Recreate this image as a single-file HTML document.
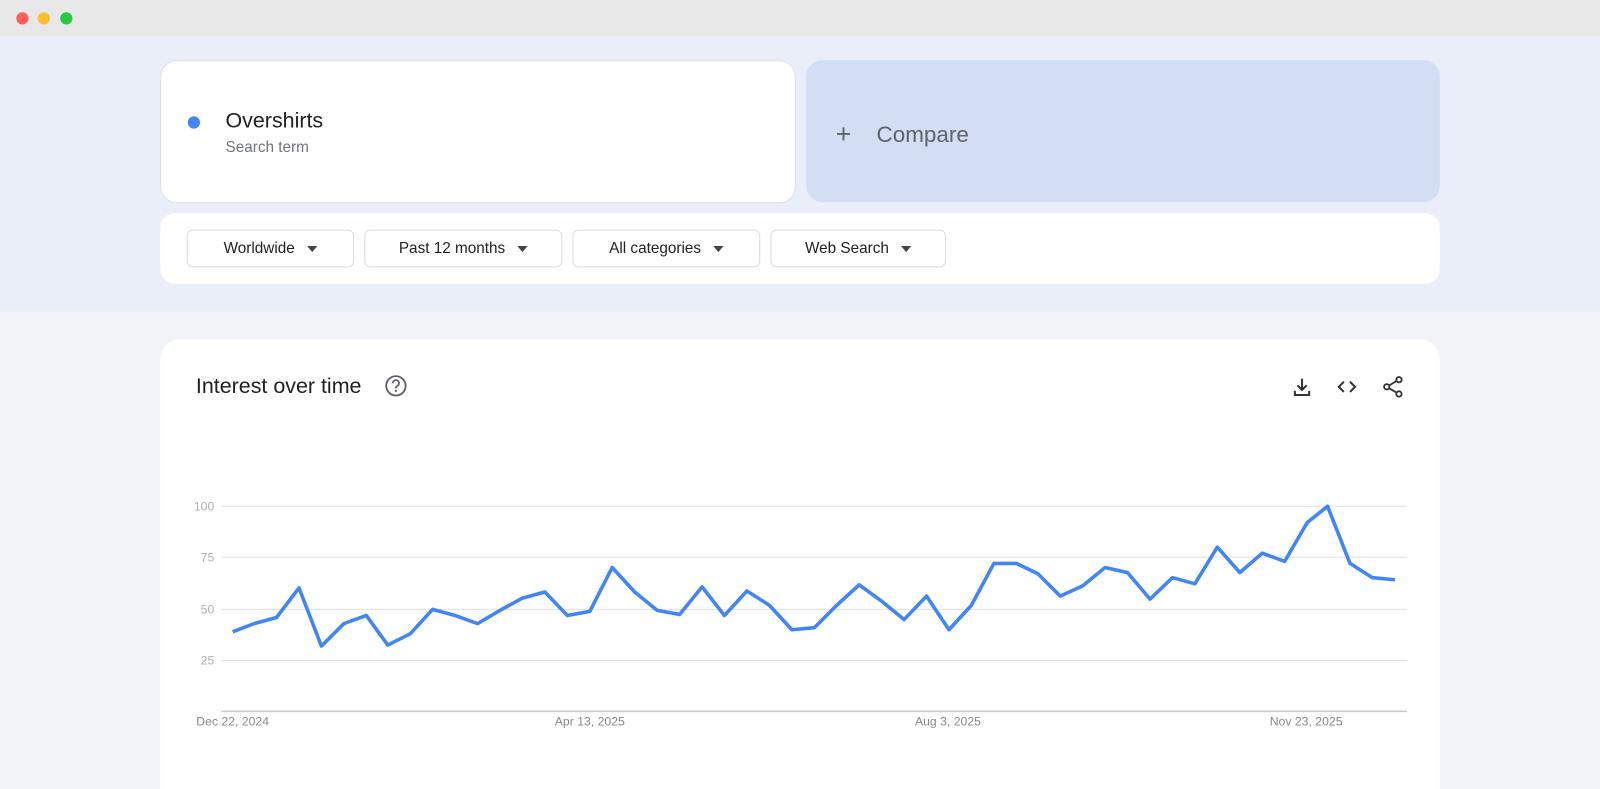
<!DOCTYPE html>
<html><head><meta charset="utf-8"><style>
html,body{margin:0;padding:0;width:1600px;height:789px;overflow:hidden;background:#f1f3f9;}
#w{position:absolute;left:0;top:0;width:1568px;height:773px;transform:scale(1.020408,1.020672);transform-origin:0 0;font-family:"Liberation Sans",Arial,sans-serif;background:#f1f3f9;overflow:hidden;}
.a{position:absolute;}
.btn{position:absolute;top:225px;height:37px;border:1px solid #dadce0;border-radius:6px;background:#fff;box-sizing:border-box;font-size:15px;color:#202124;display:flex;align-items:center;justify-content:center;gap:12px;}
.tri{width:0;height:0;border-left:5px solid transparent;border-right:5px solid transparent;border-top:6px solid #444;}
</style></head><body><div id="w">
<div class="a" style="left:0;top:0;width:1568px;height:35px;background:#e8e8e8"></div>
<div class="a" style="left:16px;top:12px;width:12px;height:12px;border-radius:50%;background:#ff5f57"></div>
<div class="a" style="left:37px;top:12px;width:12px;height:12px;border-radius:50%;background:#febc2e"></div>
<div class="a" style="left:59px;top:12px;width:12px;height:12px;border-radius:50%;background:#28c840"></div>
<div class="a" style="left:0;top:35px;width:1568px;height:270px;background:#e9eef8"></div>
<div class="a" style="left:157px;top:59px;width:623px;height:140px;background:#fff;border:1px solid #dfe2e8;border-radius:16px;box-sizing:border-box"></div>
<div class="a" style="left:184px;top:114px;width:12px;height:12px;border-radius:50%;background:#4285f4"></div>
<div class="a" style="left:221px;top:107px;font-size:21px;color:#202124">Overshirts</div>
<div class="a" style="left:221px;top:136px;font-size:15px;color:#70757a">Search term</div>
<div class="a" style="left:790px;top:59px;width:621px;height:139px;background:#d3def4;border-radius:16px"></div>
<div class="a" style="left:819px;top:117px;font-size:26px;color:#5f6368;line-height:28px">+</div>
<div class="a" style="left:859px;top:119px;font-size:22px;color:#5f6368">Compare</div>
<div class="a" style="left:157px;top:209px;width:1254px;height:69px;background:#fff;border-radius:14px"></div>
<div class="btn" style="left:183px;width:164px">Worldwide<span class="tri"></span></div>
<div class="btn" style="left:357px;width:194px">Past 12 months<span class="tri"></span></div>
<div class="btn" style="left:561px;width:184px">All categories<span class="tri"></span></div>
<div class="btn" style="left:755px;width:172px">Web Search<span class="tri"></span></div>
<div class="a" style="left:157px;top:332px;width:1254px;height:441px;background:#fff;border-radius:20px 20px 0 0"></div>
<div class="a" style="left:192px;top:367px;font-size:21px;color:#202124">Interest over time</div>
<svg class="a" style="left:376px;top:366px" width="24" height="24" viewBox="0 0 24 24"><circle cx="12" cy="12" r="9.5" fill="none" stroke="#5f6368" stroke-width="1.8"/><path d="M9 9.5a3 3 0 1 1 4.2 2.7c-.8.4-1.2 1-1.2 1.8v.5" fill="none" stroke="#5f6368" stroke-width="1.8"/><circle cx="12" cy="17" r="1.1" fill="#5f6368"/></svg>
<svg class="a" style="left:1265px;top:368px" width="22" height="22" viewBox="0 0 22 22"><path d="M11 3v11M6.5 9.5L11 14l4.5-4.5M4 15v4h14v-4" fill="none" stroke="#333" stroke-width="2"/></svg>
<svg class="a" style="left:1309px;top:368px" width="22" height="22" viewBox="0 0 22 22"><path d="M8 6l-5 5 5 5M14 6l5 5-5 5" fill="none" stroke="#333" stroke-width="2"/></svg>
<svg class="a" style="left:1353px;top:367px" width="24" height="24" viewBox="0 0 24 24"><circle cx="18" cy="5" r="2.6" fill="none" stroke="#333" stroke-width="1.8"/><circle cx="6" cy="12" r="2.6" fill="none" stroke="#333" stroke-width="1.8"/><circle cx="18" cy="19" r="2.6" fill="none" stroke="#333" stroke-width="1.8"/><path d="M8.3 10.7l7.4-4.4M8.3 13.3l7.4 4.4" stroke="#333" stroke-width="1.8"/></svg>
<svg class="a" style="left:0;top:0" width="1568" height="773">
<g stroke="#e0e0e0" stroke-width="1"><line x1="217" y1="496" x2="1379" y2="496"/><line x1="217" y1="546" x2="1379" y2="546"/><line x1="217" y1="597" x2="1379" y2="597"/><line x1="217" y1="647" x2="1379" y2="647"/></g>
<line x1="217" y1="697" x2="1379" y2="697" stroke="#c8c8c8" stroke-width="1.5"/>
<g font-family="Liberation Sans,Arial,sans-serif" font-size="12" fill="#b0b0b0" text-anchor="end"><text x="210" y="500">100</text><text x="210" y="550">75</text><text x="210" y="601">50</text><text x="210" y="651">25</text></g>
<g font-family="Liberation Sans,Arial,sans-serif" font-size="12" fill="#888" text-anchor="middle"><text x="228" y="711">Dec 22, 2024</text><text x="578" y="711">Apr 13, 2025</text><text x="929" y="711">Aug 3, 2025</text><text x="1280" y="711">Nov 23, 2025</text></g>
<polyline fill="none" stroke="#4285f4" stroke-width="3.5" stroke-linejoin="round" points="228,619 249,611 271,605 293,576 315,633 337,611 359,603 380,632 402,621 424,597 446,603 468,611 490,598 512,586 534,580 556,603 578,599 600,556 622,580 644,598 666,602 688,575 710,603 732,579 754,593 776,617 798,615 820,593 842,573 864,589 886,607 908,584 930,617 952,593 974,552 996,552 1017,562 1039,584 1061,574 1083,556 1105,561 1127,587 1149,566 1171,572 1193,536 1215,561 1237,542 1259,550 1281,512 1301,496 1323,552 1345,566 1367,568"/>
</svg>
</div></body></html>
